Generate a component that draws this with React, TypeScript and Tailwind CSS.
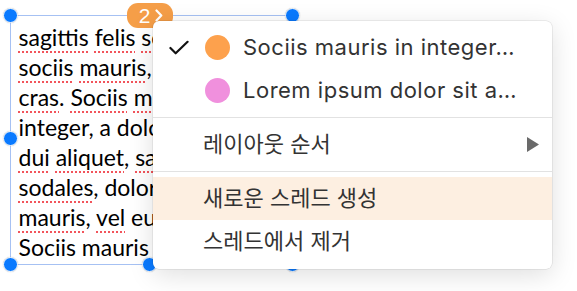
import React from "react";

const Handle = ({ className }: { className: string }) => (
  <div
    className={
      "absolute w-[15px] h-[15px] rounded-full bg-[#0a7aff] border-[1.5px] border-white shadow-[0_0_1px_rgba(0,0,0,0.3)] " +
      className
    }
  />
);

const U = ({ children }: { children: React.ReactNode }) => (
  <span className="underline decoration-dotted decoration-[#f2545b] decoration-[2px] underline-offset-[5px]">
    {children}
  </span>
);

export default function App() {
  return (
    <div className="relative w-[577px] h-[291px] bg-white overflow-hidden">
      {/* text box */}
      <div className="relative ml-[10px] mt-[15px] w-[282px] h-[250px] border-[1.5px] border-[#a6c1f3]">
        <div className="h-[240px] overflow-hidden pl-[7.5px] pt-[6px] font-['Lato',sans-serif] text-[23px] leading-[30px] text-black whitespace-nowrap">
          <div>
            <U>sagittis</U> <U>felis</U> <U>sociis</U>
          </div>
          <div>
            <U>sociis</U> <U>mauris</U>, in integer
          </div>
          <div>
            <U>cras</U>. <U>Sociis</U> <U>mauris</U>
          </div>
          <div>integer, a dolor</div>
          <div>
            <U>dui</U> <U>aliquet</U>, <U>sagittis</U>
          </div>
          <div>
            <U>sodales</U>, dolor
          </div>
          <div>
            <U>mauris</U>, <U>vel</U> eu
          </div>
          <div>
            <U>Sociis</U> <U>mauris</U> in
          </div>
        </div>

        <Handle className="left-[-8px] top-[-8px]" />
        <Handle className="left-[-8px] top-[115px]" />
        <Handle className="left-[-8px] bottom-[-8px]" />
        <Handle className="left-[131px] bottom-[-8px]" />
        <Handle className="left-[132px] top-[-8px]" />
        <Handle className="right-[-9px] top-[-8px]" />
        <Handle className="right-[-9px] bottom-[-8px]" />

        {/* thread badge */}
        <div className="absolute left-[115.5px] top-[-13.5px] w-[46px] h-[25px] rounded-[11px] bg-[#f59e48] flex items-center justify-center gap-[5px] pl-[3px]">
          <span className="font-['Liberation_Sans',sans-serif] text-[21px] leading-none text-white">2</span>
          <svg width="8" height="13" viewBox="0 0 8 13" fill="none">
            <path d="M1.5 1.5 L6.3 6.5 L1.5 11.5" stroke="white" strokeWidth="2.2" strokeLinecap="round" strokeLinejoin="round" />
          </svg>
        </div>
      </div>

      {/* context menu */}
      <div className="absolute left-[153px] top-[21px] w-[399px] bg-white rounded-[6px] pt-[5px] pb-[6px] shadow-[0_6px_26px_rgba(0,0,0,0.13),0_0_0_0.5px_rgba(0,0,0,0.12)] font-['Inter','Noto_Sans_CJK_KR',sans-serif] text-[22px] text-[#333333]">
        <div className="h-[43px] flex items-center pl-[16px]">
          <div className="w-[20px] flex justify-center">
            <svg width="21" height="16" viewBox="0 0 21 16" fill="none">
              <path d="M1.5 8 L7 13.5 L19.5 1.5" stroke="#111" strokeWidth="2.3" strokeLinecap="round" strokeLinejoin="round" />
            </svg>
          </div>
          <div className="ml-[16px] w-[25px] h-[25px] rounded-full bg-[#fda14d]" />
          <span className="ml-[13px] tracking-[0.5px]">Sociis mauris in integer…</span>
        </div>
        <div className="h-[43px] flex items-center pl-[16px]">
          <div className="w-[20px]" />
          <div className="ml-[16px] w-[25px] h-[25px] rounded-full bg-[#f090dd]" />
          <span className="ml-[13px] tracking-[0.5px]">Lorem ipsum dolor sit a…</span>
        </div>
        <div className="my-[5px] h-px bg-[#e2e2e2]" />
        <div className="h-[43px] flex items-center pl-[50px] pr-[13px] justify-between">
          <span>레이아웃 순서</span>
          <svg width="12" height="15" viewBox="0 0 12 15">
            <path d="M0 0 L12 7.5 L0 15 Z" fill="#6a6a6a" />
          </svg>
        </div>
        <div className="my-[5px] h-px bg-[#e2e2e2]" />
        <div className="h-[43px] flex items-center pl-[50px] bg-[#fdefe1]">
          <span>새로운 스레드 생성</span>
        </div>
        <div className="h-[43px] flex items-center pl-[50px]">
          <span>스레드에서 제거</span>
        </div>
      </div>
    </div>
  );
}
